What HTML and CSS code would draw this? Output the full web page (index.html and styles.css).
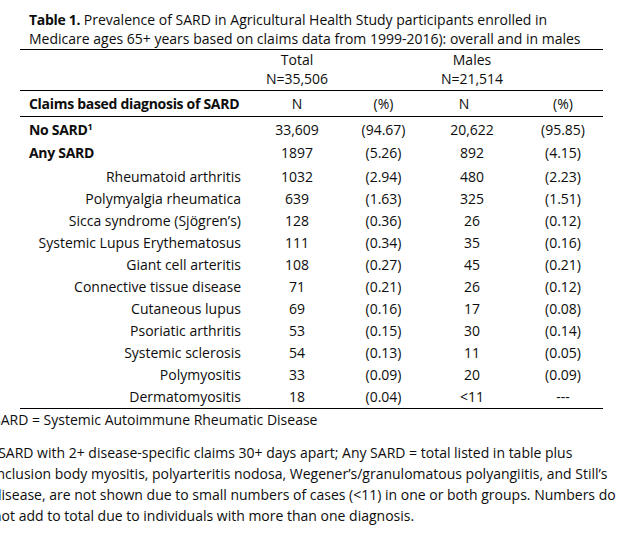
FILE: index.html
```html
<!DOCTYPE html>
<html>
<head>
<meta charset="utf-8">
<link rel="stylesheet" href="styles.css">
</head>
<body>
<div class="page">
  <p class="title"><b>Table 1.</b> Prevalence of SARD in Agricultural Health Study participants enrolled in<br>Medicare ages 65+ years based on claims data from 1999-2016): overall and in males</p>
  <div class="table">
    <div class="row head-top">
      <div></div>
      <div class="c">Total<br>N=35,506</div>
      <div></div>
      <div class="c">Males<br>N=21,514</div>
      <div></div>
    </div>
    <div class="row head-sub">
      <div class="lbl-left"><b>Claims based diagnosis of SARD</b></div>
      <div class="c">N</div>
      <div class="c">(%)</div>
      <div class="c n2h">N</div>
      <div class="c p2">(%)</div>
    </div>
    <div class="row main first">
      <div class="lbl-left"><b>No SARD<sup>1</sup></b></div>
      <div class="c">33,609</div>
      <div class="c">(94.67)</div>
      <div class="c">20,622</div>
      <div class="c p2">(95.85)</div>
    </div>
    <div class="row main second">
      <div class="lbl-left"><b>Any SARD</b></div>
      <div class="c">1897</div>
      <div class="c">(5.26)</div>
      <div class="c">892</div>
      <div class="c p2">(4.15)</div>
    </div>
    <div class="row sub"><div class="lbl">Rheumatoid arthritis</div><div class="c">1032</div><div class="c">(2.94)</div><div class="c">480</div><div class="c p2">(2.23)</div></div>
    <div class="row sub"><div class="lbl">Polymyalgia rheumatica</div><div class="c">639</div><div class="c">(1.63)</div><div class="c">325</div><div class="c p2">(1.51)</div></div>
    <div class="row sub"><div class="lbl">Sicca syndrome (Sjögren’s)</div><div class="c">128</div><div class="c">(0.36)</div><div class="c">26</div><div class="c p2">(0.12)</div></div>
    <div class="row sub"><div class="lbl">Systemic Lupus Erythematosus</div><div class="c">111</div><div class="c">(0.34)</div><div class="c">35</div><div class="c p2">(0.16)</div></div>
    <div class="row sub"><div class="lbl">Giant cell arteritis</div><div class="c">108</div><div class="c">(0.27)</div><div class="c">45</div><div class="c p2">(0.21)</div></div>
    <div class="row sub"><div class="lbl">Connective tissue disease</div><div class="c">71</div><div class="c">(0.21)</div><div class="c">26</div><div class="c p2">(0.12)</div></div>
    <div class="row sub"><div class="lbl">Cutaneous lupus</div><div class="c">69</div><div class="c">(0.16)</div><div class="c">17</div><div class="c p2">(0.08)</div></div>
    <div class="row sub"><div class="lbl">Psoriatic arthritis</div><div class="c">53</div><div class="c">(0.15)</div><div class="c">30</div><div class="c p2">(0.14)</div></div>
    <div class="row sub"><div class="lbl">Systemic sclerosis</div><div class="c">54</div><div class="c">(0.13)</div><div class="c">11</div><div class="c p2">(0.05)</div></div>
    <div class="row sub"><div class="lbl">Polymyositis</div><div class="c">33</div><div class="c">(0.09)</div><div class="c">20</div><div class="c p2">(0.09)</div></div>
    <div class="row sub last"><div class="lbl">Dermatomyositis</div><div class="c">18</div><div class="c">(0.04)</div><div class="c">&lt;11</div><div class="c p2">---</div></div>
  </div>
  <div class="notes">
    <p class="note1">SARD = Systemic Autoimmune Rheumatic Disease</p>
    <p class="note2"><sup>1</sup>SARD with 2+ disease-specific claims 30+ days apart; Any SARD = total listed in table plus<br>inclusion body myositis, polyarteritis nodosa, Wegener’s/granulomatous polyangiitis, and Still’s<br>disease, are not shown due to small numbers of cases (&lt;11) in one or both groups. Numbers do<br>not add to total due to individuals with more than one diagnosis.</p>
  </div>
</div>
</body>
</html>
```

FILE: styles.css
```css
html, body {
  margin: 0;
  padding: 0;
  background: #ffffff;
}
body {
  font-family: "Open Sans", "Liberation Sans", sans-serif;
  font-size: 14px;
  color: #0d0d0d;
  overflow: hidden;
  width: 627px;
  height: 559px;
}
b {
  letter-spacing: -0.3px;
}
.page {
  padding-top: 10px;
}
.title {
  margin: 0 0 1px 29px;
  line-height: 19px;
  white-space: nowrap;
}
.table {
  margin-left: 20px;
  width: 583px;
  border-top: 1px solid #000;
}
.row {
  display: grid;
  grid-template-columns: 234px 86px 87px 90px 86px;
}
.c {
  text-align: center;
  white-space: nowrap;
}
.p2 {
  padding-left: 6px;
}
.n2h {
  padding-right: 16px;
}
.head-top {
  height: 40px;
  line-height: 19px;
  border-bottom: 1px solid #000;
}
.head-sub {
  height: 25px;
  line-height: 25px;
  border-bottom: 1px solid #000;
}
.lbl-left {
  padding-left: 9px;
  white-space: nowrap;
}
.lbl {
  text-align: right;
  padding-right: 13px;
  white-space: nowrap;
}
.main.first {
  height: 24px;
  line-height: 25px;
}
.main.second {
  height: 25px;
  line-height: 24px;
}
.sub {
  height: 22px;
  line-height: 22px;
}
.sub.last {
  border-bottom: 1px solid #000;
}
sup {
  font-size: 9px;
  line-height: 0;
  vertical-align: 5px;
  letter-spacing: 0;
}
.notes {
  margin-left: -7px;
  white-space: nowrap;
}
.note1 {
  margin: 0;
  line-height: 22px;
}
.note2 {
  margin: 11px 0 0 0;
  line-height: 21px;
}
```
